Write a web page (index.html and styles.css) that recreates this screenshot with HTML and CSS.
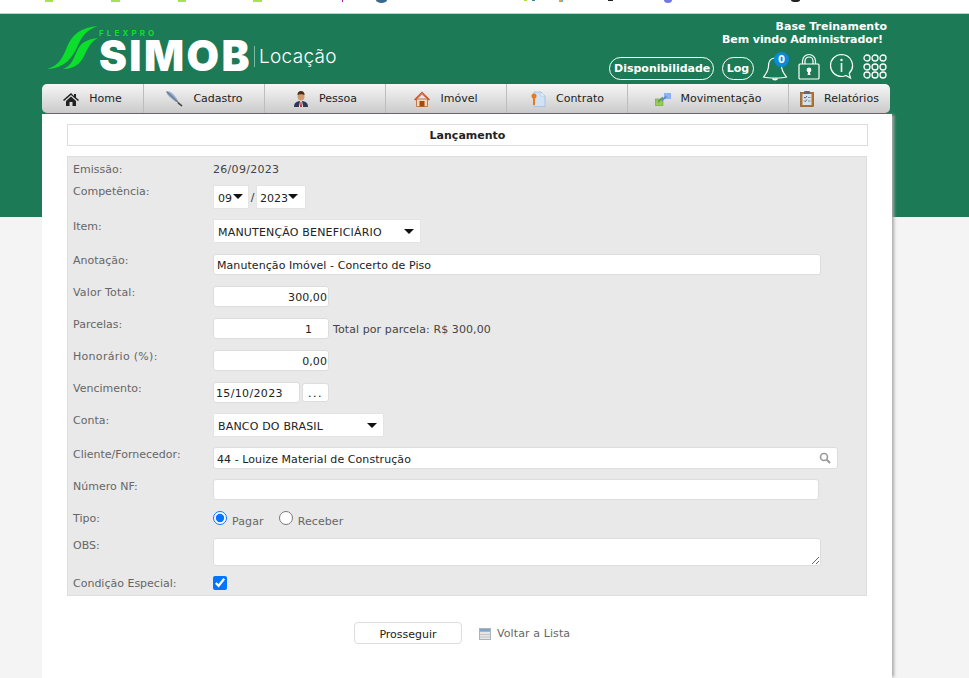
FILE: index.html
```html
<!DOCTYPE html>
<html lang="pt-BR">
<head>
<meta charset="utf-8">
<title>SIMOB Locação - Lançamento</title>
<link rel="stylesheet" href="styles.css">
</head>
<body>
<svg class="strip" width="969" height="13" viewBox="0 0 969 13" aria-hidden="true">
  <g fill="#a6e24a"><rect x="45" y="0" width="8" height="2"/><rect x="111" y="0" width="9" height="2"/><rect x="178" y="0" width="8" height="2"/><rect x="253" y="0" width="9" height="2"/><rect x="524" y="0" width="3" height="1"/></g>
  <rect x="342" y="0" width="1" height="2" fill="#a020a0"/>
  <path d="M376 0h11a5.500 3 0 0 1-11 0z" fill="#3a6a8a"/>
  <rect x="532" y="0" width="3" height="1" fill="#3a8a9a"/><rect x="559" y="0" width="2" height="2" fill="#e0a040"/><rect x="561" y="0" width="2" height="2" fill="#70b0e0"/>
  <rect x="608" y="0" width="5" height="1" fill="#222"/>
  <path d="M664 0h8a4 3 0 0 1-8 0z" fill="#7078e8"/>
  <path d="M791 0h9a4.500 2 0 0 1-9 0z" fill="#222"/>
</svg>
<div class="band"></div>
<div class="shell">
  <header class="brandbar">
    <div class="logo">
      <svg class="swoosh" width="52" height="44" viewBox="0 0 52 44">
        <path d="M0 43C12 40 16 31 20 21C25 8 35 1 51 0C40 4 36 9 32 17C26 31 19 42 0 43Z" fill="#0bdf2c"/>
        <path d="M16 43C25 40 27 31 31 23C35 15 43 13 51 12C45 15 42 20 39 26C35 35 30 43 16 43Z" fill="#0bdf2c"/>
      </svg>
      <div class="logo-text">
        <span class="flexpro">FLEXPRO</span>
        <div class="logo-main"><span class="simob">SIMOB</span><span class="locacao">Locação</span></div>
      </div>
    </div>
    <div class="userbox">
      <div class="base">Base Treinamento</div>
      <div class="welcome">Bem vindo Administrador!</div>
      <div class="actions">
        <a class="pill">Disponibilidade</a>
        <a class="pill pill-log">Log</a>
        <span class="bell">
          <svg width="26" height="28" viewBox="0 0 26 28" fill="none" stroke="#fff" stroke-width="1.200">
            <path d="M13 5C8 5 6.500 9 6.500 13C6.500 18 4 20.500 1.500 24C6 25.300 20 25.300 24.500 24C22 20.500 19.500 18 19.500 13C19.500 9 18 5 13 5Z"/>
            <path d="M10.500 25.500C11 27.300 15 27.300 15.500 25.500" fill="#fff"/>
          </svg>
          <span class="badge">0</span>
        </span>
        <svg class="ico-lock" width="22" height="27" viewBox="0 0 22 27" fill="none" stroke="#fff" stroke-width="1.200">
          <path d="M4.500 11V8a6.500 6.500 0 0 1 13 0v3M7 11V8a4 4 0 0 1 8 0v3"/>
          <rect x="1" y="11" width="20" height="15" rx="1"/>
          <circle cx="11" cy="17" r="1.800" fill="#fff"/><path d="M9.500 22h3l-.7-4h-1.600z" fill="#fff" stroke="none"/>
        </svg>
        <svg class="ico-info" width="25" height="27" viewBox="0 0 25 27" fill="none" stroke="#fff" stroke-width="1.200">
          <path d="M12.500 1.500a11 11 0 0 0 0 22c1.800 0 3-.3 4.300-1l4.700 2.500-1.300-4.700a11 11 0 0 0-7.700-18.800Z"/>
          <circle cx="12.500" cy="7" r="1.200" fill="#fff" stroke="none"/><rect x="11.700" y="10" width="1.600" height="9" fill="#fff" stroke="none"/>
        </svg>
        <svg class="ico-grid" width="24" height="27" viewBox="0 0 24 27" fill="none" stroke="#fff" stroke-width="1.300">
          <circle cx="4" cy="5" r="3"/><circle cx="12" cy="5" r="3"/><circle cx="20" cy="5" r="3"/>
          <circle cx="4" cy="14" r="3"/><circle cx="12" cy="14" r="3"/><circle cx="20" cy="14" r="3"/>
          <circle cx="4" cy="22" r="3"/><circle cx="12" cy="22" r="3"/><circle cx="20" cy="22" r="3"/>
        </svg>
      </div>
    </div>
  </header>
  <nav class="nav">
    <a class="nav-item w101">
      <svg width="16" height="16" viewBox="0 0 16 16"><path d="M8 2L0 9l1 1 7-6 7 6 1-1-3-2.600V3h-2v2z" fill="#222"/><path d="M3 10l5-4.500 5 4.500v5H9.500v-4h-3v4H3z" fill="#222"/></svg>
      <span>Home</span>
    </a>
    <a class="nav-item w121">
      <svg width="18" height="16" viewBox="0 0 18 16"><path d="M1 0C6 0 10 4 13 10L11 11C7 8 2 5 1 0Z" fill="#8cacd8"/><path d="M2 1L17 15" stroke="#777" stroke-width="1.200"/><path d="M13 12l4 3" stroke="#444" stroke-width="1.500"/></svg>
      <span>Cadastro</span>
    </a>
    <a class="nav-item w121">
      <svg width="16" height="16" viewBox="0 0 16 16"><path d="M1 16c0-4 2-5 5-6h4c3 1 5 2 5 6z" fill="#2c3a56"/><path d="M7 10h2l1 6H6z" fill="#fff"/><path d="M7.500 10.500h1l.5 5.500H7z" fill="#d02030"/><ellipse cx="8" cy="5" rx="3.500" ry="4.500" fill="#d09a70"/><path d="M4.500 4C4.500 1 6 0 8 0s3.500 1 3.500 4C10 3 6 3 4.500 4z" fill="#4a2c18"/></svg>
      <span>Pessoa</span>
    </a>
    <a class="nav-item w121">
      <svg width="16" height="16" viewBox="0 0 16 16"><path d="M2.500 8h11v7.500h-11z" fill="#f0d8b8" stroke="#b8602e" stroke-width=".800"/><path d="M8 0.500L0 8.500l1.200 1L8 3.500l6.800 6 1.200-1z" fill="#cc5530"/><path d="M3 7.500L8 2 13 7.500 8 3.500z" fill="#e08a68"/><rect x="5.500" y="10" width="5" height="5.500" fill="#a04a1a"/></svg>
      <span>Imóvel</span>
    </a>
    <a class="nav-item w121">
      <svg width="16" height="16" viewBox="0 0 16 16"><path d="M4 1h7l4 4v10.500H4z" fill="#cfe2f6" stroke="#9fbcdc" stroke-width=".800"/><path d="M11 1v4h4z" fill="#f4f8fc" stroke="#9fbcdc" stroke-width=".500"/><circle cx="4" cy="5" r="2.500" fill="#e87a20"/><rect x="3" y="6" width="2" height="8" fill="#e87a20"/></svg>
      <span>Contrato</span>
    </a>
    <a class="nav-item w161">
      <svg width="16" height="16" viewBox="0 0 16 16"><rect x="0.500" y="8" width="7.500" height="6.500" fill="#94cc54" stroke="#6ca038" stroke-width=".600"/><path d="M3 11L8 6.500" stroke="#6ca038" stroke-width="2"/><rect x="9" y="2" width="7" height="6" fill="#8cb4ec"/><path d="M6.500 9.500l5-4" stroke="#5c8cd4" stroke-width="2"/></svg>
      <span>Movimentação</span>
    </a>
    <a class="nav-item w101">
      <svg width="14" height="16" viewBox="0 0 14 16"><rect x="0.500" y="1.500" width="13" height="14" fill="#b4712c" stroke="#7a4a1a" stroke-width=".600"/><rect x="2.500" y="3" width="9" height="11" fill="#d4e4e8"/><rect x="4" y="0" width="6" height="3" rx="1" fill="#667"/><path d="M4 6l1.200 1.200L7 5M4 9.500l1.200 1.200L7 8.500" stroke="#558" fill="none"/><path d="M8 6.500h2.500M8 10h2.500" stroke="#889"/></svg>
      <span>Relatórios</span>
    </a>
  </nav>
  <main class="panel">
    <div class="title">Lançamento</div>
    <form class="form">
      <div class="row h23"><label>Emissão:</label><span class="value date">26/09/2023</span></div>
      <div class="row h34"><label class="lift">Competência:</label>
        <div class="inline">
          <span class="sel w36 month"><select><option>09</option></select></span>
          <span class="slash">/</span>
          <span class="sel w50 year"><select><option>2023</option></select></span>
        </div>
      </div>
      <div class="row h35"><label>Item:</label><span class="sel w208 caps"><select><option>MANUTENÇÃO BENEFICIÁRIO</option></select></span></div>
      <div class="row"><label class="lift">Anotação:</label><input class="field w608" type="text" value="Manutenção Imóvel - Concerto de Piso"></div>
      <div class="row"><label class="lift wide">Valor Total:</label><input class="field w116 right" type="text" value="300,00"></div>
      <div class="row"><label class="lift">Parcelas:</label>
        <div class="inline"><input class="field w116 right pad15" type="text" value="1"><span class="value note">Total por parcela: R$ 300,00</span></div>
      </div>
      <div class="row"><label class="lift pct">Honorário (%):</label><input class="field w116 right" type="text" value="0,00"></div>
      <div class="row h31"><label class="lift">Vencimento:</label>
        <div class="inline"><input class="field w87 datefield" type="text" value="15/10/2023"><button class="dots" type="button">...</button></div>
      </div>
      <div class="row h34"><label>Conta:</label><span class="sel w171 caps"><select><option>BANCO DO BRASIL</option></select></span></div>
      <div class="row"><label>Cliente/Fornecedor:</label>
        <div class="search">
          <input class="field w625" type="text" value="44 - Louize Material de Construção">
          <svg class="lens" width="12" height="12" viewBox="0 0 12 12" fill="none" stroke="#999"><circle cx="5" cy="5" r="3.500" stroke-width="1.600"/><path d="M7.800 7.800L11 11" stroke-width="2"/></svg>
        </div>
      </div>
      <div class="row"><label>Número NF:</label><input class="field w606" type="text"></div>
      <div class="row h27"><label>Tipo:</label>
        <div class="radios">
          <input type="radio" name="tipo" checked><span class="radio-label">Pagar</span>
          <input class="second" type="radio" name="tipo"><span class="radio-label">Receber</span>
        </div>
      </div>
      <div class="row h38"><label>OBS:</label><textarea class="field obs"></textarea></div>
      <div class="row h20"><label>Condição Especial:</label><input class="check" type="checkbox" checked></div>
    </form>
    <div class="footer">
      <button class="go" type="button">Prosseguir</button>
      <a class="back">
        <svg width="12" height="12" viewBox="0 0 12 12"><rect width="12" height="12" fill="#a9b4bc"/><rect x="1" y="1" width="10" height="2" fill="#7fa6c8"/><rect x="1" y="4" width="10" height="7" fill="#e6e6e6"/><path d="M1 6.500h10M1 9h10" stroke="#c4c4c4"/></svg>
        <span>Voltar a Lista</span>
      </a>
    </div>
  </main>
</div>
</body>
</html>
```
FILE: styles.css
```css
* { box-sizing: border-box; }
html, body { margin: 0; height: 678px; overflow: hidden; }
body {
  background: #f4f4f4;
  font-family: "DejaVu Sans", Verdana, sans-serif;
  font-size: 11px;
  color: #333;
  position: relative;
}
.strip { display: block; background: #fff; border: 0; }
.band {
  position: absolute;
  left: 0; right: 0; top: 13px;
  height: 204px;
  background: #1c7a56;
  border-top: 1px solid #ccc;
}
.shell { position: relative; width: 850px; margin: 1px 0 0 42px; }

/* header */
.brandbar { height: 70px; display: flex; justify-content: space-between; width: 848px; }
.logo { display: flex; align-items: flex-start; padding: 12px 0 0 5px; }
.swoosh { flex: none; }
.logo-text { padding-top: 3px; display: flex; flex-direction: column; }
.flexpro {
  font: 700 8px/9px "Inter", sans-serif;
  letter-spacing: 3.100px;
  color: #0bdf2c;
}
.logo-main { display: flex; align-items: center; height: 36px; }
.simob {
  font: 900 42px/36px "Inter", sans-serif;
  color: #fff;
  letter-spacing: 2.400px;
}
.locacao {
  font: 300 19px/21px "Inter", sans-serif;
  color: #fff;
  margin-left: 2px;
  padding-left: 4px;
  border-left: 1px solid #7fb8a0;
  letter-spacing: .3px;
}
.userbox { padding: 6px 3px 0 0; text-align: right; color: #fff; font-weight: 700; line-height: 13px; }
.welcome { padding-right: 4px; letter-spacing: -.08px; }
.actions { display: flex; align-items: center; margin-top: 6px; height: 29px; letter-spacing: 0; }
.pill {
  height: 23px;
  margin-top: 4px;
  padding: 0 4px;
  border: 1.500px solid #fff;
  border-radius: 12px;
  line-height: 21px;
  color: #fff;
  width: 105px;
  text-align: center;
  white-space: nowrap;
}
.pill-log { width: 32px; margin-left: 8px; padding: 0; }
.bell { position: relative; display: block; width: 26px; height: 28px; margin-left: 8px; }
.bell svg { display: block; }
.badge {
  position: absolute;
  left: 12px; top: -1px;
  width: 15px; height: 15px;
  border-radius: 50%;
  background: #0a8ad8;
  color: #fff;
  font-size: 10px;
  line-height: 15px;
  text-align: center;
}
.ico-lock { margin-left: 10px; }
.ico-info { margin-left: 9px; }
.ico-grid { margin-left: 9px; }

/* nav */
.nav {
  display: flex;
  width: 848px;
  height: 29px;
  background: linear-gradient(#f6f6f6, #cbcbcb);
  border-radius: 5px;
}
.nav-item {
  display: flex;
  align-items: center;
  justify-content: center;
  gap: 10px;
  color: #222;
  border-right: 1px solid #bdbdbd;
}
.nav-item:last-child { border-right: 0; }
.nav-item svg { flex: none; }
.w101 { width: 102px; }
.w121 { width: 121px; }
.w161 { width: 161px; }
.nav-item:last-child { width: 101px; }

/* panel */
.panel {
  width: 850px;
  height: 564px;
  margin-top: 1px;
  padding: 10px 24px 0 25px;
  background: #fff;
  box-shadow: 3px 0 3px -1px #aaa;
}
.title {
  height: 22px;
  width: 801px;
  border: 1px solid #ddd;
  text-align: center;
  font-weight: 700;
  line-height: 22px;
  color: #222;
}
.form {
  margin-top: 10px;
  width: 800px;
  height: 440px;
  padding: 5px 0 0 5px;
  background: #e9e9e9;
  border: 1px solid #ddd;
}
.row {
  display: grid;
  grid-template-columns: 140px 1fr;
  align-items: start;
  height: 32px;
}
.h20 { height: 20px; }
.h23 { height: 23px; }
.h27 { height: 27px; }
.h31 { height: 31px; }
.h34 { height: 34px; }
.h35 { height: 35px; }
.h38 { height: 38px; }
label { color: #666; line-height: 14px; padding-top: 1px; }
label.lift { padding-top: 0; }
.wide { letter-spacing: .15px; }
.pct { letter-spacing: .3px; }
.value { line-height: 14px; padding-top: 1px; color: #444; }
.date { letter-spacing: .3px; }
.inline { display: flex; align-items: flex-start; }

.field {
  display: block;
  height: 21px;
  padding: 2px 3px 0;
  border: 1px solid #ddd;
  border-radius: 3px;
  background: #fff;
  font: inherit;
  letter-spacing: .07px;
  color: #222;
  outline: 0;
}
.right { text-align: right; padding-right: 1px; }
.pad15 { padding-right: 16px; }
.datefield { letter-spacing: .35px; padding-left: 2px; }
.w87 { width: 87px; }
.w116 { width: 116px; }
.w606 { width: 606px; }
.w608 { width: 608px; }
.w625 { width: 625px; height: 22px; padding-top: 3px; padding-right: 24px; }
.note { margin: 4px 0 0 4px; letter-spacing: .09px; }
.dots {
  width: 27px; height: 19px;
  margin: 1px 0 0 2px;
  padding: 2px 0 0;
  border: 1px solid #ddd;
  border-radius: 3px;
  background: #fff;
  font: inherit;
  letter-spacing: 1.500px;
  color: #111;
}
.sel { position: relative; display: block; height: 24px; }
.sel select {
  display: block;
  width: 100%; height: 100%;
  padding: 2px 0 0 4px;
  border: 1px solid #e4e4e4;
  border-radius: 0;
  background: #fff;
  font: inherit;
  color: #222;
  appearance: none;
  outline: 0;
}
.sel::after {
  content: "";
  position: absolute;
  right: 7px; top: 10px;
  border: 5.500px solid transparent;
  border-top: 5.500px solid #111;
  border-bottom: 0;
}
.caps select { letter-spacing: .18px; }
.month::after { right: 6px; top: 9px; }
.year::after { right: 8px; top: 9px; }
.year select { padding-left: 3px; }
.w36 { width: 36px; }
.w50 { width: 50px; }
.w171 { width: 171px; }
.w208 { width: 208px; }
.slash { width: 7px; text-align: center; line-height: 24px; margin-top: 1px; }
.search { position: relative; width: 625px; }
.lens { position: absolute; right: 7px; top: 5px; }
.radios { display: flex; align-items: flex-start; }
.radios input { margin: 0; width: 14px; height: 14px; }
.radio-label { margin: 4px 0 0 5px; color: #666; line-height: 13px; letter-spacing: .1px; }
.radios .second { margin-left: 15px; }
.obs { width: 608px; height: 28px; padding: 2px 3px; resize: vertical; }
.check { margin: 0; width: 14px; height: 14px; }

/* footer */
.footer { display: flex; align-items: center; margin: 26px 0 0 287px; }
.go {
  width: 108px; height: 22px;
  padding: 2px 0 0;
  border: 1px solid #ddd;
  border-radius: 4px;
  background: #fff;
  font: inherit;
  color: #222;
}
.back { display: flex; align-items: center; gap: 6px; margin-left: 17px; color: #666; padding-top: 1px; letter-spacing: .1px; }
```
